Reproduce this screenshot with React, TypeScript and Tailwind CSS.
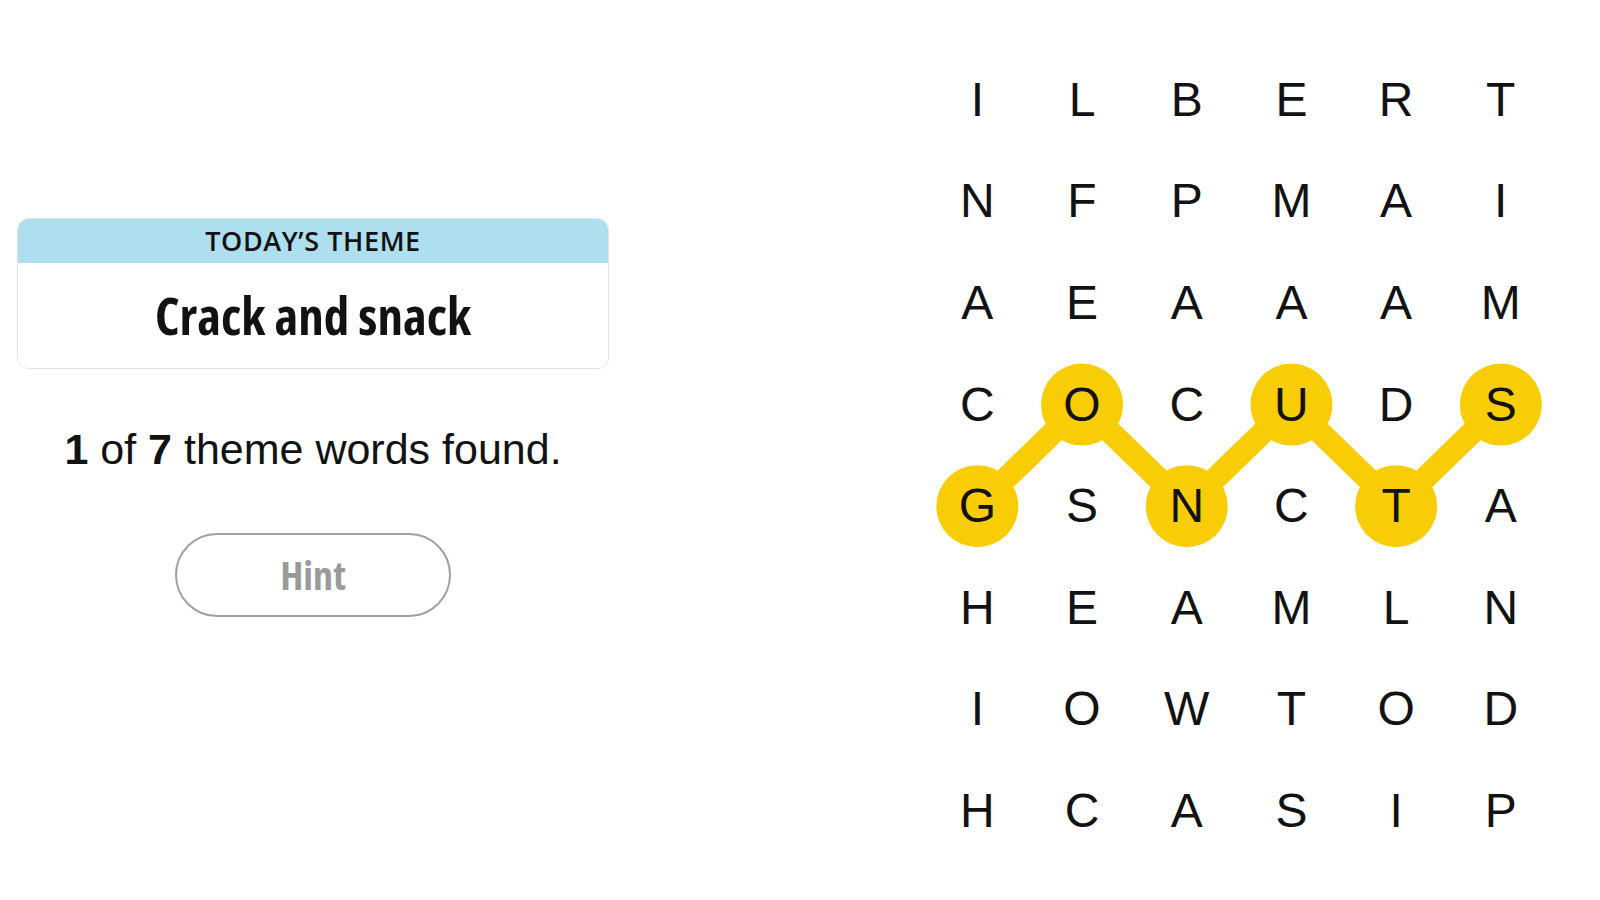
import React from "react"

const LETTERS = [
  "ILBERT",
  "NFPMAI",
  "AEAAAM",
  "COCUDS",
  "GSNCTA",
  "HEAMLN",
  "IOWTOD",
  "HCASIP",
]

const CELL_W = 104.7
const CELL_H = 101.6

// spangram path: [row, col]
const PATH: [number, number][] = [
  [4, 0],
  [3, 1],
  [4, 2],
  [3, 3],
  [4, 4],
  [3, 5],
]

const narrow = { fontFamily: '"Open Sans", "DejaVu Sans Condensed", sans-serif' }

function ThemeCard() {
  return (
    <div className="w-full overflow-hidden rounded-[12px] border border-[#e2e2e2]">
      <div className="flex h-[44px] items-center justify-center bg-[#aedfee]">
        <span className="text-[27px] font-semibold tracking-[0.6px] text-[#121212]" style={narrow}>
          TODAY’S THEME
        </span>
      </div>
      <div className="flex h-[105px] items-center justify-center bg-white">
        <span className="font-stretch-condensed text-[51px] font-bold text-[#121212]" style={narrow}>
          Crack and snack
        </span>
      </div>
    </div>
  )
}

function Board() {
  const found = new Set(PATH.map(([r, c]) => `${r}-${c}`))
  const pts = PATH.map(([r, c]) => `${c * CELL_W + CELL_W / 2},${r * CELL_H + CELL_H / 2}`).join(" ")

  return (
    <div className="relative mt-[49px] ml-[316px]">
      <svg className="absolute left-0 top-0" width={629} height={813}>
        <polyline points={pts} fill="none" stroke="#f8cd05" strokeWidth={23} strokeLinejoin="round" strokeLinecap="round" />
        {PATH.map(([r, c]) => (
          <circle key={`${r}-${c}`} cx={c * CELL_W + CELL_W / 2} cy={r * CELL_H + CELL_H / 2} r={41} fill="#f8cd05" />
        ))}
      </svg>
      <div className="relative grid grid-cols-[repeat(6,104.7px)] grid-rows-[repeat(8,101.6px)]">
        {LETTERS.map((row, r) =>
          row.split("").map((ch, c) => (
            <div
              key={`${r}-${c}`}
              className={`flex items-center justify-center text-[48px] text-[#121212] ${found.has(`${r}-${c}`) ? "font-medium" : ""}`}
              style={{ fontFamily: '"Liberation Sans", Arial, sans-serif' }}
            >
              {ch}
            </div>
          ))
        )}
      </div>
    </div>
  )
}

export default function App() {
  return (
    <div className="flex h-[900px] w-[1600px] bg-white">
      <div className="ml-[17px] flex w-[592px] flex-col items-center pt-[218px]">
        <ThemeCard />
        <p
          className="mt-[54px] text-[43px] leading-[52px] text-[#121212]"
          style={{ fontFamily: '"Liberation Sans", Arial, sans-serif' }}
        >
          <span className="font-bold">1</span> of <span className="font-bold">7</span> theme words found.
        </p>
        <button
          className="mt-[58px] flex h-[84px] w-[276px] items-center justify-center rounded-full border-2 border-[#a0a0a0] bg-white font-stretch-condensed text-[40px] font-bold text-[#9a9a9a]"
          style={narrow}
        >
          Hint
        </button>
      </div>
      <Board />
    </div>
  )
}
